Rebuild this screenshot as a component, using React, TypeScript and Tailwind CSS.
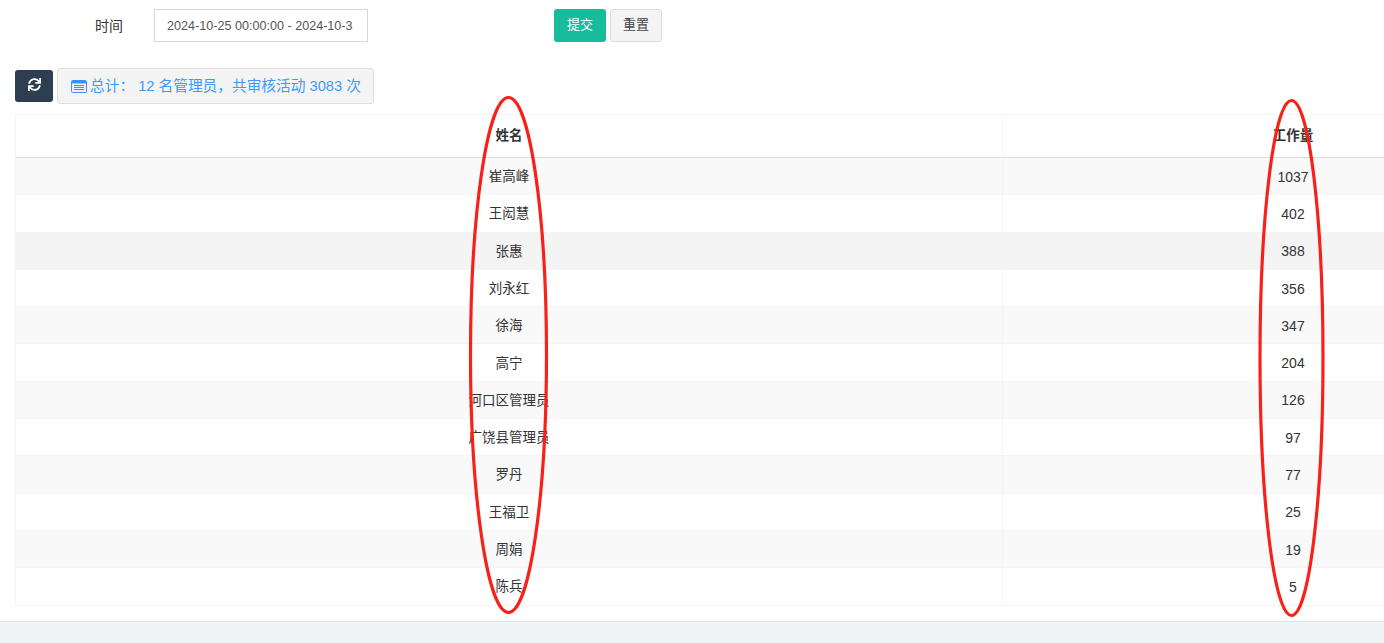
import React from "react";
import { FaSync } from "react-icons/fa";

const rows: [string, number][] = [
  ["崔高峰", 1037],
  ["王闳慧", 402],
  ["张惠", 388],
  ["刘永红", 356],
  ["徐海", 347],
  ["高宁", 204],
  ["河口区管理员", 126],
  ["广饶县管理员", 97],
  ["罗丹", 77],
  ["王福卫", 25],
  ["周娟", 19],
  ["陈兵", 5],
];

const font = "font-['Liberation_Sans','Noto_Sans_CJK_SC',sans-serif]";

export default function App() {
  return (
    <div className={`${font} relative flex h-[643px] w-[1384px] flex-col overflow-hidden bg-white text-[14px] text-[#333]`}>
      <div className="flex h-[621px] flex-col">
        <form className="flex h-[33px] mt-[9px] items-center">
          <label className="ml-[95px] w-[59px] pt-[2px] text-[14px] text-[#333]">时间</label>
          <div className="flex h-[33px] w-[214px] items-center overflow-hidden whitespace-nowrap border border-[#d5d7de] bg-white pl-[12px] pr-[14px] pt-[1px] text-[12.6px] text-[#555]">
            2024-10-25 00:00:00 - 2024-10-3
          </div>
          <button type="button" className="ml-[186px] h-[33px] w-[52px] rounded-[3px] bg-[#18bc9c] pb-[2px] text-[13px] font-normal text-white">提交</button>
          <button type="button" className="ml-[4px] h-[33px] w-[52px] rounded-[3px] border border-[#ddd] bg-[#f4f4f4] pb-[2px] text-[13px] text-[#444]">重置</button>
        </form>
        <div className="ml-[15px] mt-[26px] flex h-[36px] items-center gap-[4px]">
          <button type="button" className="flex h-[32px] w-[38px] items-center justify-center rounded-[3px] bg-[#2c3e50] pb-[3px] text-white">
            <FaSync size={13} />
          </button>
          <div className="flex h-[36px] w-[317px] items-center rounded-[3px] border border-[#ddd] bg-[#f4f4f4] pl-[13px] text-[14.7px] text-[#3c9aff]">
            <svg width="16" height="13" viewBox="0 0 16 13" className="mr-[3px]" fill="none">
              <rect x="0.5" y="0.5" width="15" height="12" rx="1" fill="#e8f2ff" stroke="#3c8dff" />
              <rect x="1" y="1" width="14" height="2.4" fill="#3c8dff" />
              <path d="M3 5.5h10M3 7.5h10M3 9.5h10" stroke="#3c8dff" />
            </svg>
            <span className="whitespace-pre">总计： 12 名管理员，共审核活动 3083 次</span>
          </div>
        </div>
        <div className="mt-[10px] overflow-hidden pl-[15px]">
          <table className="w-[1569px] table-fixed border-collapse border border-[#f4f4f4]">
            <thead>
              <tr className="h-[43px] border-b border-b-[#ddd]">
                <th className="w-[987px] border-r border-[#f4f4f4] pt-[1px] text-center text-[13.5px] font-bold text-[#333]">姓名</th>
                <th className="pt-[1px] text-center text-[13.5px] font-bold text-[#333]">工作量</th>
              </tr>
            </thead>
            <tbody>
              {rows.map(([name, count], i) => (
                <tr key={name} className={`h-[37.3px] border-b border-[#f4f4f4] ${i === 2 ? "bg-[#f4f4f4]" : i % 2 === 0 ? "bg-[#f9f9f9]" : "bg-white"}`}>
                  <td className="border-r border-[#f4f4f4] pt-[2px] text-center text-[13.5px]">{name}</td>
                  <td className="pt-[2px] text-center text-[14px]">{count}</td>
                </tr>
              ))}
            </tbody>
          </table>
        </div>
      </div>
      <div className="flex-1 border-t border-[#dfe3e6] bg-[#f0f3f6]" />
      <svg className="pointer-events-none absolute left-0 top-0" width="1384" height="643" fill="none">
        <ellipse cx="508.5" cy="355" rx="38" ry="257.5" stroke="#f8211a" strokeWidth="3.2" />
        <ellipse cx="1291.5" cy="358" rx="31.5" ry="257.5" stroke="#f8211a" strokeWidth="3.2" />
      </svg>
    </div>
  );
}
